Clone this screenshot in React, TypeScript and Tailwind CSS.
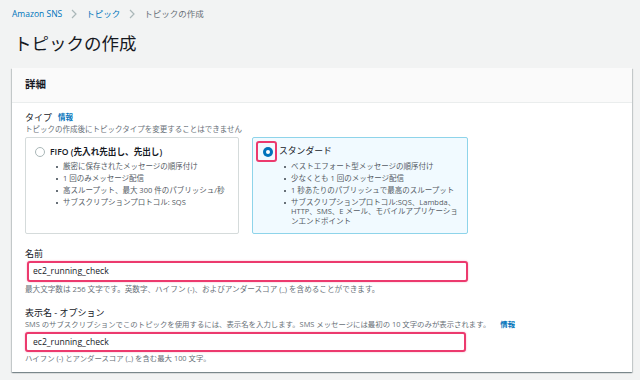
import React from 'react';

const fifoPoints = [
  '厳密に保存されたメッセージの順序付け',
  '1 回のみメッセージ配信',
  '高スループット、最大 300 件のパブリッシュ/秒',
  'サブスクリプションプロトコル: SQS',
];

const standardPoints: React.ReactNode[] = [
  'ベストエフォート型メッセージの順序付け',
  '少なくとも 1 回のメッセージ配信',
  '1 秒あたりのパブリッシュで最高のスループット',
  <>
    サブスクリプションプロトコル:SQS、Lambda、
    <br />
    HTTP、SMS、E メール、モバイルアプリケーショ
    <br />
    ンエンドポイント
  </>,
];

function Chevron() {
  return (
    <svg width="6" height="10" viewBox="0 0 6 10" className="mx-[9px]">
      <path d="M1 1l4 4-4 4" fill="none" stroke="#aab7b8" strokeWidth="1.2" />
    </svg>
  );
}

function Bullets({ items }: { items: React.ReactNode[] }) {
  return (
    <ul className="pl-[28px] text-[7.5px] leading-[9.5px] whitespace-nowrap text-[#545b64]">
      {items.map((item, i) => (
        <li key={i} className="relative mt-[2.5px]">
          <span className="absolute -left-[7px] top-[4px] h-[2px] w-[2px] bg-[#687078]" />
          {item}
        </li>
      ))}
    </ul>
  );
}

export default function App() {
  return (
    <div
      className="h-[380px] w-[640px] overflow-hidden bg-[#f2f3f3] px-3 text-[#16191f]"
      style={{ fontFamily: '"Open Sans", "Noto Sans CJK JP", sans-serif' }}
    >
      <div className="flex items-center pt-[7px] text-[8.5px] leading-[14px]">
        <span className="text-[#0073bb]">Amazon SNS</span>
        <Chevron />
        <span className="text-[#0073bb]">トピック</span>
        <Chevron />
        <span className="text-[#687078]">トピックの作成</span>
      </div>
      <h1 className="mt-[8px] ml-[2px] text-[17.5px] leading-[28px] font-normal">トピックの作成</h1>

      <div className="mt-[11px] h-[304px] w-[620px] bg-white shadow-[0_1px_1px_0_rgba(0,28,36,0.3),1px_1px_1px_0_rgba(0,28,36,0.15),-1px_1px_1px_0_rgba(0,28,36,0.15)]">
        <div className="flex h-[35px] items-center border-b border-[#eaeded] bg-[#fafafa] pl-[13px] text-[10.5px] font-bold">
          詳細
        </div>

        <div className="px-[13px] pt-[8px]">
          <div className="flex items-center gap-[6px] text-[9px] leading-[13px]">
            タイプ
            <span className="text-[7.5px] font-bold text-[#0073bb]">情報</span>
          </div>
          <div className="text-[7.5px] leading-[11px] text-[#687078]">
            トピックの作成後にトピックタイプを変更することはできません
          </div>

          <div className="mt-[2px] flex gap-[13px]">
            <div className="h-[97px] w-[214px] rounded-[2px] border border-[#d5dbdb] pl-[9px] pt-[7px]">
              <div className="flex h-[14px] items-center gap-[5px]">
                <span className="h-[10px] w-[10px] rounded-full border border-[#aab7b8] bg-white" />
                <span className="text-[8.6px] font-semibold">FIFO (先入れ先出し、先出し)</span>
              </div>
              <Bullets items={fifoPoints} />
            </div>

            <div className="h-[97px] w-[216px] rounded-[2px] border border-[#8ed4ea] bg-[#f1faff] pl-[10px] pt-[7px]">
              <div className="flex h-[14px] items-center gap-[6px]">
                <span className="relative flex h-[10px] w-[10px] items-center justify-center rounded-full bg-[#0073bb]">
                  <span className="h-[4px] w-[4px] rounded-full bg-white" />
                  <span className="absolute -left-[7px] -top-[6px] h-[21px] w-[21px] rounded-[3px] border-2 border-[#ec3a6e]" />
                </span>
                <span className="text-[8.8px]">スタンダード</span>
              </div>
              <Bullets items={standardPoints} />
            </div>
          </div>

          <div className="mt-[13px] text-[9px] leading-[13px]">名前</div>
          <div className="mt-[1px] ml-[2px] flex h-[21px] w-[441px] items-center rounded-[3px] border-2 border-[#ec3a6e] bg-white pl-[4px] text-[8.6px] shadow-[0_0_2px_rgba(236,58,110,0.4)]">
            ec2_running_check
          </div>
          <div className="mt-[2px] text-[7.6px] leading-[11px] text-[#687078]">
            最大文字数は 256 文字です。英数字、ハイフン (-)、およびアンダースコア (_) を含めることができます。
          </div>

          <div className="mt-[11px] text-[9px] leading-[13px]">表示名 - オプション</div>
          <div className="flex items-center gap-[10px] text-[7.4px] leading-[10px] text-[#687078]">
            SMS のサブスクリプションでこのトピックを使用するには、表示名を入力します。SMS メッセージには最初の 10 文字のみが表示されます。
            <span className="font-bold text-[#0073bb]">情報</span>
          </div>
          <div className="mt-[3px] flex h-[20px] w-[441px] items-center rounded-[3px] border-2 border-[#ec3a6e] bg-white pl-[6px] text-[8.6px] shadow-[0_0_2px_rgba(236,58,110,0.4)]">
            ec2_running_check
          </div>
          <div className="mt-[1px] text-[7.4px] leading-[11px] text-[#687078]">
            ハイフン (-) とアンダースコア (_) を含む最大 100 文字。
          </div>
        </div>
      </div>
    </div>
  );
}
